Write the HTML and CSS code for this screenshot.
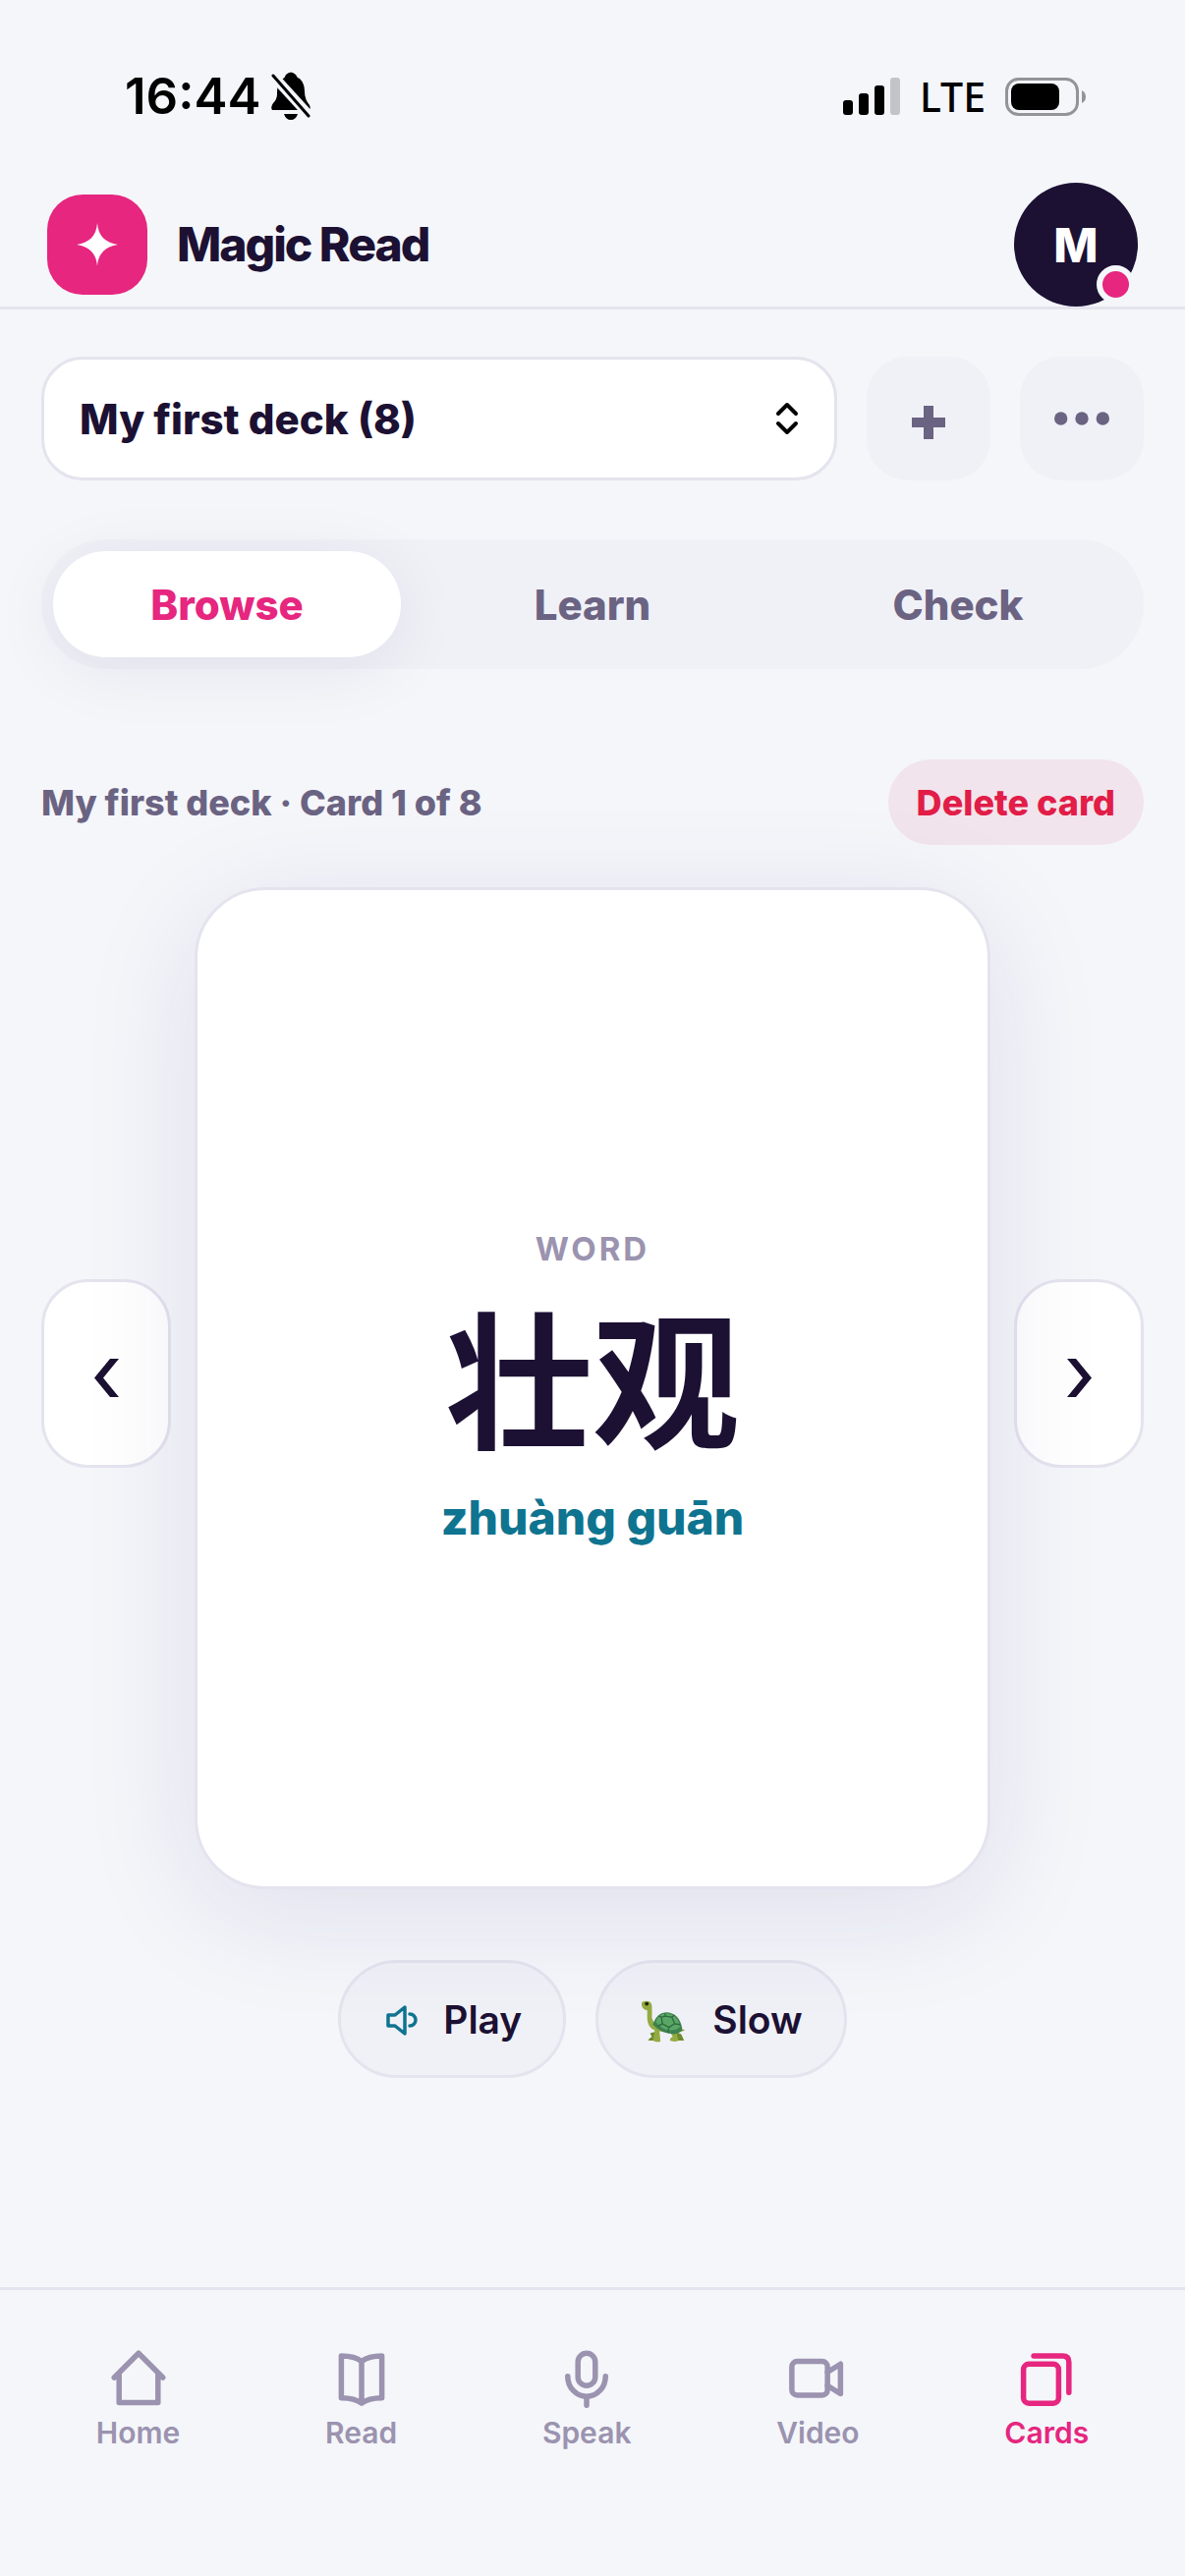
FILE: index.html
```html
<!DOCTYPE html>
<html lang="en">
<head>
<meta charset="utf-8">
<meta name="viewport" content="width=device-width, initial-scale=1">
<title>Magic Read</title>
<link rel="stylesheet" href="styles.css">
</head>
<body>
<div class="app">
  <div class="status">
    <div class="status-left">
      <span class="time">16:44</span>
      <svg class="bell" width="40" height="50" viewBox="0 0 40 50" aria-hidden="true">
        <path d="M1 39 Q-1 36 2 32 Q6 28 6 23 V20 Q6 12 12 7 Q14 6 15 3 Q20 -2 25 3 Q26 6 29 7 Q34 12 34 20 Q34 28 39 34 Q41 39 37 39 Z M13 43 H27 Q25 49 20 49 Q15 49 13 43 Z" fill="#000"/>
        <path d="M0 2 L40 46" stroke="#f4f6fa" stroke-width="10"/>
        <path d="M2 4 L38 45" stroke="#000" stroke-width="3" stroke-linecap="round"/>
      </svg>
    </div>
    <div class="status-right">
      <svg width="58" height="38" viewBox="0 0 58 38" aria-hidden="true">
        <rect x="0" y="23" width="10" height="15" rx="3"/><rect x="16" y="16" width="10" height="22" rx="3"/><rect x="32" y="8" width="10" height="30" rx="3"/><rect x="48" y="0" width="10" height="38" rx="3" fill="#c3c4c8"/>
      </svg>
      <span class="lte">LTE</span>
      <svg width="83" height="39" viewBox="0 0 83 39" aria-hidden="true">
        <rect x="1.5" y="1.5" width="72" height="36" rx="12" fill="none" stroke="#939497" stroke-width="3"/><rect x="6" y="6" width="49" height="27" rx="8"/><path d="M78 13 Q82 15 82 19.500 Q82 24 78 26 Z" fill="#939497"/>
      </svg>
    </div>
  </div>

  <header class="header">
    <div class="brand">
      <span class="logo">
        <svg width="42" height="44" viewBox="0 0 42 44" aria-hidden="true"><path d="M21 0 C22 13 29 20 42 22 C29 24 22 31 21 44 C20 31 13 24 0 22 C13 20 20 13 21 0 Z" fill="#fff"/></svg>
      </span>
      <h1 class="brand-name">Magic Read</h1>
    </div>
    <button class="avatar" type="button">M<span class="dot"></span></button>
  </header>

  <main class="main">
    <div class="deck-row">
      <div class="deck-pick">
        <select class="deck-select" aria-label="Deck"><option>My first deck (8)</option></select>
        <svg class="deck-arrows" width="24" height="34" viewBox="0 0 24 34" fill="none" stroke="#000" stroke-width="4" stroke-linecap="round" stroke-linejoin="round" aria-hidden="true"><path d="M3 12 L12 3 L21 12 M3 22 L12 31 L21 22"/></svg>
      </div>
      <button class="square add" type="button" aria-label="Add deck"><svg width="34" height="34" viewBox="0 0 34 34" aria-hidden="true"><path d="M12 0h10v12h12v10H22v12H12V22H0V12h12z" fill="currentColor"/></svg></button>
      <button class="square" type="button" aria-label="More"><svg width="56" height="14" viewBox="0 0 56 14" fill="currentColor" aria-hidden="true"><circle cx="6.700" cy="7" r="6.700"/><circle cx="28" cy="7" r="6.700"/><circle cx="49.300" cy="7" r="6.700"/></svg></button>
    </div>

    <div class="tabs">
      <button class="tab active" type="button">Browse</button>
      <button class="tab" type="button">Learn</button>
      <button class="tab" type="button">Check</button>
    </div>

    <div class="meta">
      <p class="position">My first deck · Card 1 of 8</p>
      <button class="delete" type="button">Delete card</button>
    </div>

    <div class="stage">
      <button class="step" type="button" aria-label="Previous card"><svg width="25" height="39" viewBox="0 0 25 39" aria-hidden="true"><path d="M16 0h9L9 19.500 25 39h-9L0 19.500z" fill="currentColor"/></svg></button>
      <article class="card">
        <p class="kind">WORD</p>
        <p class="word" lang="zh-Hans">壮观</p>
        <p class="pinyin">zhuàng guān</p>
      </article>
      <button class="step" type="button" aria-label="Next card"><svg width="25" height="39" viewBox="0 0 25 39" aria-hidden="true"><path d="M9 0H0l16 19.500L0 39h9l16-19.500z" fill="currentColor"/></svg></button>
    </div>

    <div class="audio">
      <button class="pill" type="button">
        <svg width="38" height="38" viewBox="5 4 38 38" fill="none" stroke="#0e7490" stroke-width="3.500" stroke-linecap="round" stroke-linejoin="round" aria-hidden="true"><path d="M11 19 H18 L28 11 V38 L18 30 H11 Z M33 18 A6 6 0 0 1 33 30"/></svg>
        <span>Play</span>
      </button>
      <button class="pill" type="button">
        <svg width="50" height="50" viewBox="-1 -5 52 52" aria-hidden="true">
          <path d="M40 30 L47 33 L41 35 Z" fill="#7f9a35"/>
          <path d="M10 36 L18 34 L16 44 H8 Q9 41 12 40 Z M38 35 L43 37 L46 44 H38 Z" fill="#6d8a2c"/>
          <path d="M1 5 Q1 2 6 2 Q12 2 12 8 V20 Q14 27 20 29 L38 36 L40 44 Q37 46 31 44 Q31 41 34 40 L32 36 L20 34 L21 45 Q16 46 13 44 L15 33 Q7 30 7 20 V12 Q1 11 1 5 Z" fill="#93ab42"/>
          <path d="M13 27 Q17 14 28 14 Q41 15 44 31 Q44 36 36 37 Q22 37 13 27 Z" fill="#3f8150"/>
          <path d="M16 24 Q19 15 28 15 Q39 16 42 29 Q38 33 31 33 Q22 32 16 24 Z" fill="#5aa765"/>
          <path d="M22 19 L26 18 L33 19 L36 26 L30 30 L23 26 Z M26 18 V15 M33 19 L36 17 M36 26 L42 27 M30 30 L29 35 M23 26 L18 29 M22 19 L19 18" fill="none" stroke="#2e6b40" stroke-width="1.400"/>
          <circle cx="6.500" cy="5" r="2" fill="#1f2412"/>
        </svg>
        <span>Slow</span>
      </button>
    </div>
  </main>

  <nav class="nav">
    <a class="nav-item" href="#home"><svg class="nav-icon" viewBox="0 0 24 24"><path d="M3 12 L12 3 L21 12 M4.800 10.500 V21.300 H19.200 V10.500"/></svg>Home</a>
    <a class="nav-item" href="#read"><svg class="nav-icon" viewBox="0 0 24 24"><path d="M12 6 Q9.500 4 4.500 4 V19.500 Q9.500 19.500 12 21.500 Q14.500 19.500 19.500 19.500 V4 Q14.500 4 12 6 V21"/></svg>Read</a>
    <a class="nav-item" href="#speak"><svg class="nav-icon" viewBox="0 0 24 24"><rect x="8.800" y="3" width="6.400" height="12" rx="3.200"/><path d="M5 11.500 A7 7.500 0 0 0 19 11.500 M12 19 V22.300"/></svg>Speak</a>
    <a class="nav-item" href="#video"><svg class="nav-icon" viewBox="0 0 24 24"><rect x="2.500" y="6" width="13.200" height="12.500" rx="2"/><path d="M15.700 10 L20.500 7 V18 L15.700 15"/></svg>Video</a>
    <a class="nav-item current" href="#cards"><svg class="nav-icon" viewBox="0 0 24 24"><rect x="3.500" y="7" width="13" height="14.500" rx="2"/><path d="M7.300 4 H18 Q20.300 4 20.300 6.300 V17.500"/></svg>Cards</a>
  </nav>
</div>
</body>
</html>
```
FILE: styles.css
```css
:root {
  --bg: #f4f6fa;
  --soft: #f0f1f7;
  --line: #e4e3ee;
  --ink: #1c1133;
  --muted: #6b6382;
  --faint: #9b93af;
  --pink: #e6267f;
}

* { box-sizing: border-box; }

body {
  margin: 0;
  background: var(--bg);
  color: var(--ink);
  font-family: Inter, "Noto Sans CJK SC", sans-serif;
}

button, select { font: inherit; color: inherit; border: 0; margin: 0; padding: 0; }
h1, p { margin: 0; }
svg { flex: none; display: block; }

.app { display: flex; flex-direction: column; min-height: 100vh; }

.status {
  display: flex;
  justify-content: space-between;
  align-items: center;
  height: 186px;
  padding: 10px 100px 0 127px;
  color: #000;
}
.status-left { display: flex; align-items: center; gap: 11px; }
.status-right { display: flex; align-items: center; gap: 20px; }
.time { font-size: 51px; line-height: 60px; font-weight: 600; }
.lte { font-family: "Noto Sans", sans-serif; font-size: 41px; line-height: 48px; font-weight: 500; }

.header {
  display: flex;
  justify-content: space-between;
  align-items: center;
  padding: 0 48px;
  border-bottom: 3px solid var(--line);
}
.brand { display: flex; align-items: center; gap: 30px; }
.logo {
  display: grid;
  place-items: center;
  width: 102px;
  height: 102px;
  border-radius: 36px;
  background: var(--pink);
}
.brand-name { font-size: 48px; line-height: 60px; font-weight: 800; letter-spacing: -2px; }
.avatar {
  position: relative;
  width: 126px;
  height: 126px;
  border-radius: 50%;
  background: var(--ink);
  color: #fff;
  font-size: 48px;
  font-weight: 800;
}
.dot {
  position: absolute;
  right: 3px;
  bottom: 3px;
  width: 39px;
  height: 39px;
  border: 6px solid var(--bg);
  border-radius: 50%;
  background: var(--pink);
}

.main { flex: 1; padding: 48px 42px; }

.deck-row { display: flex; gap: 30px; }
.deck-pick { position: relative; flex: 1; }
.deck-select {
  appearance: none;
  width: 100%;
  height: 126px;
  padding: 0 90px 0 36px;
  border: 3px solid var(--line);
  border-radius: 42px;
  background: #fff;
  font-size: 42px;
  font-weight: 800;
}
.deck-arrows { position: absolute; right: 39px; top: 46px; pointer-events: none; }
.square {
  display: grid;
  place-items: center;
  width: 126px;
  height: 126px;
  border-radius: 42px;
  background: var(--soft);
  color: var(--muted);
}
.add { padding-top: 8px; }

.tabs {
  display: grid;
  grid-template-columns: repeat(3, 1fr);
  gap: 18px;
  margin-top: 60px;
  padding: 12px;
  border-radius: 66px;
  background: var(--soft);
}
.tab {
  height: 108px;
  border-radius: 54px;
  background: none;
  color: var(--muted);
  font-size: 42px;
  font-weight: 800;
}
.tab.active {
  background: #fff;
  color: var(--pink);
  box-shadow: 0 12px 72px rgba(28, 17, 51, 0.07);
}

.meta {
  display: flex;
  justify-content: space-between;
  align-items: center;
  margin-top: 92px;
  color: var(--muted);
  font-size: 36px;
  font-weight: 800;
}
.delete {
  height: 87px;
  padding: 0 29px;
  border-radius: 44px;
  background: rgba(225, 29, 72, 0.08);
  color: #e11d48;
}

.stage {
  display: flex;
  align-items: center;
  gap: 24px;
  margin-top: 43px;
}
.step {
  display: grid;
  place-items: center;
  flex: none;
  width: 132px;
  height: 192px;
  margin-bottom: 30px;
  padding-top: 8px;
  border: 3px solid var(--line);
  border-radius: 48px;
  background: #fff;
}
.card {
  position: relative;
  z-index: 1;
  flex: 1;
  display: flex;
  flex-direction: column;
  align-items: center;
  justify-content: center;
  min-height: 1020px;
  border: 3px solid var(--line);
  border-radius: 72px;
  background: #fff;
  box-shadow: 0 24px 120px rgba(45, 30, 110, 0.1);
}
.kind { color: var(--faint); font-size: 33px; line-height: 40px; font-weight: 700; letter-spacing: 3px; }
.word { margin-top: 28px; font-size: 150px; line-height: 180px; font-weight: 700; }
.pinyin { margin-top: 16px; color: #0e7490; font-size: 48px; line-height: 60px; font-weight: 800; }

.audio { display: flex; justify-content: center; gap: 30px; margin-top: 72px; }
.pill {
  display: flex;
  align-items: center;
  gap: 24px;
  height: 120px;
  padding: 0 42px;
  border: 3px solid var(--line);
  border-radius: 60px;
  background: var(--soft);
  font-size: 39px;
  font-weight: 600;
}

.nav {
  display: flex;
  justify-content: space-around;
  min-height: 294px;
  padding: 56px 24px 0;
  border-top: 3px solid var(--line);
}
.nav-item {
  display: flex;
  flex-direction: column;
  align-items: center;
  gap: 5px;
  color: var(--faint);
  font-size: 30px;
  line-height: 36px;
  font-weight: 600;
  text-decoration: none;
}
.nav-item.current { color: var(--pink); }
.nav-icon {
  width: 66px;
  height: 66px;
  fill: none;
  stroke: currentColor;
  stroke-width: 2;
  stroke-linecap: round;
  stroke-linejoin: round;
}
```
